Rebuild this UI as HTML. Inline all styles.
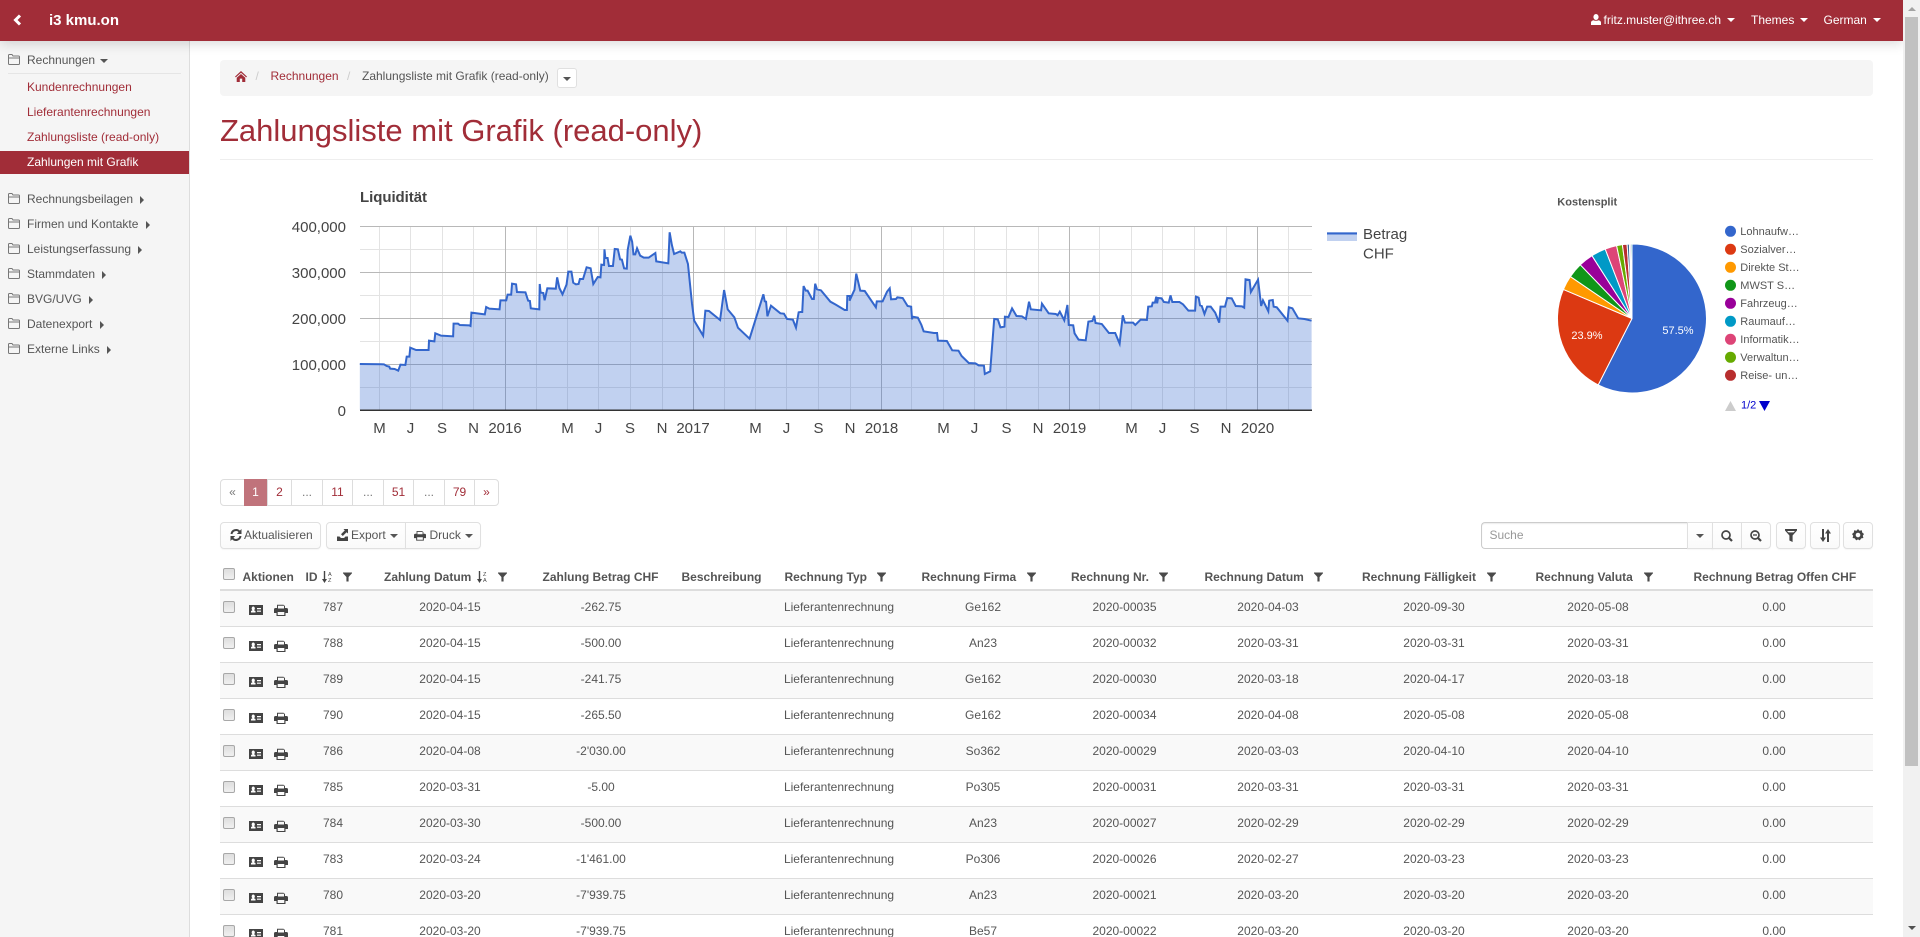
<!DOCTYPE html>
<html lang="de"><head><meta charset="utf-8"><title>Zahlungsliste mit Grafik</title>
<style>
html,body{margin:0;padding:0;width:1920px;height:937px;overflow:hidden;background:#fff;font:12px/16px "Liberation Sans",Arial,sans-serif;color:#555}
#wrap{position:absolute;left:0;top:0;width:1920px;height:937px;overflow:hidden;contain:strict}
a{color:inherit;text-decoration:none}
.t{position:absolute;white-space:nowrap;height:16px;line-height:16px}
.abs{position:absolute;box-sizing:border-box}
svg.i{position:absolute;overflow:visible}
#nav{position:absolute;left:0;top:0;width:1903px;height:41px;background:#a12d38;box-shadow:0 2px 12px rgba(0,0,0,.16);z-index:3;color:#fff}
#side{position:absolute;left:0;top:41px;width:190px;height:896px;background:#f5f5f5;border-right:1px solid #ddd;box-sizing:border-box}
#scroll{position:absolute;left:1903px;top:0;width:17px;height:937px;background:#f1f1f1;z-index:4}
.up{position:absolute;border-left:4px solid transparent;border-right:4px solid transparent}
.cd{position:absolute;width:0;height:0;border-left:4px solid transparent;border-right:4px solid transparent;border-top:4px solid #555}
.cw{border-top-color:#fff}
.cr{position:absolute;width:0;height:0;border-top:4px solid transparent;border-bottom:4px solid transparent;border-left:4px solid #555}
.lk{color:#a12d38}
.pg{position:absolute;top:479px;height:27px;box-sizing:border-box;border:1px solid #ddd;margin-left:-1px;text-align:center;line-height:24px;color:#a12d38;background:#fff;font-size:12px}
.btn{position:absolute;top:522px;height:27px;box-sizing:border-box;border:1px solid #e0e0e0;background:linear-gradient(#fff,#fafafa);box-shadow:0 1px 1px rgba(0,0,0,.04)}
.th{font-weight:bold}
.ck{position:absolute;left:223px;width:12px;height:12px;box-sizing:border-box;border:1px solid #a8a8a8;border-radius:2px;background:linear-gradient(#dedede,#f0f0f0)}
.r{position:absolute;left:220px;width:1653px;height:36px;box-sizing:border-box;border-bottom:1px solid #ddd}
.r.s{background:#f9f9f9}
.r .ck{left:3px;top:10px}
.r svg{position:absolute}
.r span{position:absolute;top:8px;line-height:17px;white-space:nowrap;transform:translateX(-50%)}
.r span:nth-of-type(1){left:113px}.r span:nth-of-type(2){left:230px}.r span:nth-of-type(3){left:381px}
.r span:nth-of-type(4){left:619px}.r span:nth-of-type(5){left:763px}.r span:nth-of-type(6){left:904.5px}
.r span:nth-of-type(7){left:1048px}.r span:nth-of-type(8){left:1214px}.r span:nth-of-type(9){left:1378px}.r span:nth-of-type(10){left:1554px}
svg text{font-family:"Liberation Sans",Arial,sans-serif}
</style></head><body>
<div id="wrap">
<svg width="0" height="0" style="position:absolute">
<symbol id="fo" viewBox="0 0 12 11"><path d="M.5 9.5V1.5Q.5.5 1.5.5H4L5 2H10.5Q11.5 2 11.5 3V9.5Q11.5 10.5 10.5 10.5H1.5Q.5 10.5 .5 9.5ZM.5 4H11.5" fill="none" stroke="#777" stroke-width="1"/></symbol>
<symbol id="fi" viewBox="0 0 10 10"><path d="M0 0H10V.8L6.2 5V10H3.8V5L0 .8Z" fill="#4a4a4a"/></symbol>
<symbol id="pr" viewBox="0 0 14 12"><path d="M3 4V.7H9.5L11 2V4H12.4Q14 4 14 5.6V9H11.5V12H2.5V9H0V5.6Q0 4 1.6 4ZM4 4.5H10V1.7H4ZM3.7 8V11H10.3V8Z" fill="#444" fill-rule="evenodd"/></symbol>
<symbol id="ca" viewBox="0 0 14 10"><path d="M0 0H14V10H0Z" fill="#444"/><path d="M2 7.5V6L3.5 5.3A1.6 2 0 1 1 5 5.3L6.5 6V7.5ZM8 3H12V4.2H8ZM8 5.6H12V6.8H8Z" fill="#fff"/></symbol>
</svg>

<div id="nav">
 <svg class="i" style="left:13px;top:14px" width="9" height="12" viewBox="0 0 9 12"><path d="M7 1.5L2.5 6L7 10.5" fill="none" stroke="#fff" stroke-width="3"/></svg>
 <span class="t" style="left:49px;top:13px;font-size:15px;font-weight:bold">i3 kmu.on</span>
 <svg class="i" style="left:1591px;top:14px" width="10" height="11" viewBox="0 0 10 11"><path d="M5 0A2.6 3 0 0 1 5 6A2.6 3 0 0 1 5 0ZM0 11V8.5Q0 6.8 2.5 6.2Q5 7.4 7.5 6.2Q10 6.8 10 8.5V11Z" fill="#fff"/></svg>
 <span class="t" style="left:1603.5px;top:12px">fritz.muster@ithree.ch</span><i class="cd cw" style="left:1727px;top:18px"></i>
 <span class="t" style="left:1751px;top:12px">Themes</span><i class="cd cw" style="left:1799.5px;top:18px"></i>
 <span class="t" style="left:1823.5px;top:12px">German</span><i class="cd cw" style="left:1872.5px;top:18px"></i>
</div>

<div id="scroll">
 <i class="up" style="left:4.5px;top:7px;border-bottom:4px solid #a3a3a3"></i>
 <div class="abs" style="left:2px;top:17px;width:13px;height:749px;background:#c1c1c1"></div>
 <i class="up" style="left:4.5px;top:926px;border-top:4px solid #505050"></i>
</div>

<div id="side"></div>
<div class="abs" style="left:8px;top:73px;width:173px;height:1px;background:#e5e5e5"></div>
<div class="abs" style="left:0;top:151px;width:189px;height:23px;background:#a12d38"></div>
<svg class="i" style="left:8px;top:54px" width="12" height="11"><use href="#fo"/></svg><span class="t" style="left:27px;top:52px">Rechnungen</span><i class="cd" style="left:100px;top:59px"></i>
<a class="t lk" style="left:27px;top:79px">Kundenrechnungen</a>
<a class="t lk" style="left:27px;top:104px">Lieferantenrechnungen</a>
<a class="t lk" style="left:27px;top:129px">Zahlungsliste (read-only)</a>
<a class="t" style="left:27px;top:154px;color:#fff">Zahlungen mit Grafik</a>
<svg class="i" style="left:8px;top:193px" width="12" height="11"><use href="#fo"/></svg><span class="t" style="left:27px;top:191px">Rechnungsbeilagen</span><i class="cr" style="left:140px;top:196px"></i>
<svg class="i" style="left:8px;top:218px" width="12" height="11"><use href="#fo"/></svg><span class="t" style="left:27px;top:216px">Firmen und Kontakte</span><i class="cr" style="left:146px;top:221px"></i>
<svg class="i" style="left:8px;top:243px" width="12" height="11"><use href="#fo"/></svg><span class="t" style="left:27px;top:241px">Leistungserfassung</span><i class="cr" style="left:138px;top:246px"></i>
<svg class="i" style="left:8px;top:268px" width="12" height="11"><use href="#fo"/></svg><span class="t" style="left:27px;top:266px">Stammdaten</span><i class="cr" style="left:102px;top:271px"></i>
<svg class="i" style="left:8px;top:293px" width="12" height="11"><use href="#fo"/></svg><span class="t" style="left:27px;top:291px">BVG/UVG</span><i class="cr" style="left:89px;top:296px"></i>
<svg class="i" style="left:8px;top:318px" width="12" height="11"><use href="#fo"/></svg><span class="t" style="left:27px;top:316px">Datenexport</span><i class="cr" style="left:100px;top:321px"></i>
<svg class="i" style="left:8px;top:343px" width="12" height="11"><use href="#fo"/></svg><span class="t" style="left:27px;top:341px">Externe Links</span><i class="cr" style="left:107px;top:346px"></i>

<div class="abs" style="left:220px;top:60px;width:1653px;height:36px;background:#f5f5f5;border-radius:4px"></div>
<svg class="i" style="left:235px;top:71px" width="12" height="11" viewBox="0 0 12 11"><path d="M6 0L12 5.6L11.2 6.4L6 1.7L.8 6.4L0 5.6ZM6 3L10.3 6.8V11H7.2V7.6H4.8V11H1.7V6.8Z" fill="#a12d38"/></svg>
<span class="t" style="left:255.5px;top:68px;color:#ccc">/</span>
<a class="t lk" style="left:270.5px;top:68px">Rechnungen</a>
<span class="t" style="left:347px;top:68px;color:#ccc">/</span>
<span class="t" style="left:362px;top:68px">Zahlungsliste mit Grafik (read-only)</span>
<div class="abs" style="left:557px;top:68px;width:20px;height:20px;background:#fff;border:1px solid #e0e0e0;border-radius:3px"></div><i class="cd" style="left:563px;top:77px"></i>

<div class="t" style="left:220px;top:113px;font-size:31px;line-height:36px;height:36px;color:#a12d38">Zahlungsliste mit Grafik (read-only)</div>
<div class="abs" style="left:220px;top:159px;width:1653px;height:1px;background:#eee"></div>

<svg class="i" style="left:0;top:0" width="1920" height="937">
 <g stroke="#e3e3e3" stroke-width="1" fill="none">
  <path d="M360 249.5H1312M360 295.5H1312M360 341.5H1312M360 387.5H1312"/>
  <path d="M379.5 226V410M410.5 226V410M442.5 226V410M473.5 226V410M536.5 226V410M567.5 226V410M598.5 226V410M630.5 226V410M662.5 226V410M724.5 226V410M755.5 226V410M786.5 226V410M818.5 226V410M850.5 226V410M911.5 226V410M943.5 226V410M974.5 226V410M1006.5 226V410M1038.5 226V410M1099.5 226V410M1131.5 226V410M1162.5 226V410M1194.5 226V410M1226.5 226V410M1288.5 226V410"/>
 </g>
 <g stroke="#b8b8b8" stroke-width="1" fill="none">
  <path d="M360 226.5H1312M360 272.5H1312M360 318.5H1312M360 364.5H1312"/>
  <path d="M505.5 226V410M693.5 226V410M881.5 226V410M1069.5 226V410M1257.5 226V410"/>
 </g>
 <g transform="translate(200 170) scale(.44643 .33333)">
  <path d="M358 720V582L412 583L418 588L424 590L426 596L436 597L444 602L449 584L460 585L463 560L469 560L471 533L484 540L512 540L513 512L525 514L527 490L540 497L567 499L568 461L578 461L582 465L603 466L606 468L608 428L638 433L641 411L648 416L671 418L673 391L686 391L689 374L697 374L699 341L708 343L710 366L729 367L735 392L739 393L741 415L760 418L761 342L763 368L769 369L772 391L778 355L797 356L800 322L805 354L812 373L821 344L825 305L832 305L836 338L842 343L848 342L851 327L858 327L866 292L875 295L881 342L891 321L897 322L899 284L905 285L906 238L908 264L913 264L916 288L925 288L929 237L936 238L941 268L945 269L950 295L956 296L958 240L964 197L968 215L971 253L975 253L979 235L986 257L994 263L1005 263L1020 249L1022 274L1049 280L1052 187L1057 225L1062 252L1076 244L1079 248L1085 248L1093 282L1102 400L1107 452L1127 497L1132 422L1140 423L1165 450L1174 360L1182 418L1197 442L1205 473L1231 506L1262 373L1265 394L1268 395L1271 439L1279 407L1300 430L1308 431L1315 447L1328 449L1335 473L1341 427L1344 426V720Z" fill="#3366cc" fill-opacity=".3"/>
  <path d="M358 582L412 583L418 588L424 590L426 596L436 597L444 602L449 584L460 585L463 560L469 560L471 533L484 540L512 540L513 512L525 514L527 490L540 497L567 499L568 461L578 461L582 465L603 466L606 468L608 428L638 433L641 411L648 416L671 418L673 391L686 391L689 374L697 374L699 341L708 343L710 366L729 367L735 392L739 393L741 415L760 418L761 342L763 368L769 369L772 391L778 355L797 356L800 322L805 354L812 373L821 344L825 305L832 305L836 338L842 343L848 342L851 327L858 327L866 292L875 295L881 342L891 321L897 322L899 284L905 285L906 238L908 264L913 264L916 288L925 288L929 237L936 238L941 268L945 269L950 295L956 296L958 240L964 197L968 215L971 253L975 253L979 235L986 257L994 263L1005 263L1020 249L1022 274L1049 280L1052 187L1057 225L1062 252L1076 244L1079 248L1085 248L1093 282L1102 400L1107 452L1127 497L1132 422L1140 423L1165 450L1174 360L1182 418L1197 442L1205 473L1231 506L1262 373L1265 394L1268 395L1271 439L1279 407L1300 430L1308 431L1315 447L1328 449L1335 473L1341 427L1344 426" fill="none" stroke="#3366cc" stroke-width="2" vector-effect="non-scaling-stroke"/>
 </g>
 <g transform="translate(800 170) scale(.44643 .33333)">
  <path d="M0 720V426L5 426L8 348L13 362L17 362L27 387L31 387L34 341L38 358L47 361L68 395L80 404L100 420L105 420L106 378L112 378L111 392L120 365L122 360L126 311L135 362L145 363L170 412L172 394L185 394L195 365L201 355L204 388L215 387L218 382L230 384L241 408L249 410L251 448L252 440L264 443L272 465L277 484L300 489L307 489L309 512L329 513L341 541L355 542L362 558L378 579L393 580L400 586L412 587L414 612L426 604L435 447L443 448L449 472L458 470L459 440L467 441L475 415L485 438L497 439L506 447L513 395L517 418L540 421L542 401L557 430L573 432L577 436L582 425L592 451L599 405L602 465L612 466L615 490L624 509L640 511L646 455L655 453L659 437L662 459L676 462L692 489L706 489L716 521L723 436L728 458L746 458L751 465L763 449L777 450L780 410L788 409L790 398L795 398L798 380L800 400L802 384L810 385L815 396L826 398L830 376L834 396L850 396L858 403L870 422L885 422L887 380L893 383L896 406L900 408L906 432L912 410L920 410L930 428L939 458L942 410L952 410L957 384L967 385L976 408L990 409L995 413L998 328L1007 330L1010 366L1026 329L1033 408L1037 391L1049 424L1051 392L1059 390L1061 410L1068 412L1092 452L1095 412L1103 415L1116 445L1130 447L1146 452V720Z" fill="#3366cc" fill-opacity=".3"/>
  <path d="M0 426L5 426L8 348L13 362L17 362L27 387L31 387L34 341L38 358L47 361L68 395L80 404L100 420L105 420L106 378L112 378L111 392L120 365L122 360L126 311L135 362L145 363L170 412L172 394L185 394L195 365L201 355L204 388L215 387L218 382L230 384L241 408L249 410L251 448L252 440L264 443L272 465L277 484L300 489L307 489L309 512L329 513L341 541L355 542L362 558L378 579L393 580L400 586L412 587L414 612L426 604L435 447L443 448L449 472L458 470L459 440L467 441L475 415L485 438L497 439L506 447L513 395L517 418L540 421L542 401L557 430L573 432L577 436L582 425L592 451L599 405L602 465L612 466L615 490L624 509L640 511L646 455L655 453L659 437L662 459L676 462L692 489L706 489L716 521L723 436L728 458L746 458L751 465L763 449L777 450L780 410L788 409L790 398L795 398L798 380L800 400L802 384L810 385L815 396L826 398L830 376L834 396L850 396L858 403L870 422L885 422L887 380L893 383L896 406L900 408L906 432L912 410L920 410L930 428L939 458L942 410L952 410L957 384L967 385L976 408L990 409L995 413L998 328L1007 330L1010 366L1026 329L1033 408L1037 391L1049 424L1051 392L1059 390L1061 410L1068 412L1092 452L1095 412L1103 415L1116 445L1130 447L1146 452" fill="none" stroke="#3366cc" stroke-width="2" vector-effect="non-scaling-stroke"/>
 </g>
 <rect x="360" y="409.5" width="952" height="1.5" fill="#333"/>
 <text x="360" y="202" font-size="15" font-weight="bold" fill="#444" textLength="67">Liquidität</text>
 <g font-size="15" fill="#444" text-anchor="end">
  <text x="346" y="232">400,000</text><text x="346" y="278">300,000</text><text x="346" y="324">200,000</text><text x="346" y="370">100,000</text><text x="346" y="416">0</text>
 </g>
 <g font-size="15" fill="#444" text-anchor="middle">
  <text x="379.5" y="433">M</text><text x="410.5" y="433">J</text><text x="442" y="433">S</text><text x="473.5" y="433">N</text><text x="505" y="433">2016</text>
  <text x="567.5" y="433">M</text><text x="598.5" y="433">J</text><text x="630" y="433">S</text><text x="662" y="433">N</text><text x="693" y="433">2017</text>
  <text x="755.5" y="433">M</text><text x="786.5" y="433">J</text><text x="818.5" y="433">S</text><text x="850" y="433">N</text><text x="881.5" y="433">2018</text>
  <text x="943.5" y="433">M</text><text x="974.5" y="433">J</text><text x="1006.5" y="433">S</text><text x="1038" y="433">N</text><text x="1069.5" y="433">2019</text>
  <text x="1131.5" y="433">M</text><text x="1162.5" y="433">J</text><text x="1194.5" y="433">S</text><text x="1226" y="433">N</text><text x="1257.5" y="433">2020</text>
 </g>
 <rect x="1327" y="232" width="30" height="9" fill="#3366cc" fill-opacity=".3"/><rect x="1327" y="232.5" width="30" height="2" fill="#3366cc"/>
 <text x="1363" y="239" font-size="15" fill="#444">Betrag</text><text x="1363" y="258.5" font-size="15" fill="#444">CHF</text>

 <text x="1557.3" y="205.5" font-size="11" font-weight="bold" fill="#555">Kostensplit</text>
 <g transform="translate(1632 318.5)" stroke="#fff" stroke-width="1" stroke-linejoin="round">
  <path d="M0 0V-74.5A74.5 74.5 0 1 1 -33.8 66.4Z" fill="#3366cc"/>
  <path d="M0 0L-33.8 66.4A74.5 74.5 0 0 1 -68.6 -29.1Z" fill="#dc3912"/>
  <path d="M0 0L-68.6 -29.1A74.5 74.5 0 0 1 -61.6 -41.9Z" fill="#ff9900"/>
  <path d="M0 0L-61.6 -41.9A74.5 74.5 0 0 1 -51.7 -53.7Z" fill="#109618"/>
  <path d="M0 0L-51.7 -53.7A74.5 74.5 0 0 1 -40 -62.8Z" fill="#990099"/>
  <path d="M0 0L-40 -62.8A74.5 74.5 0 0 1 -26.8 -69.5Z" fill="#0099c6"/>
  <path d="M0 0L-26.8 -69.5A74.5 74.5 0 0 1 -15.4 -72.9Z" fill="#dd4477"/>
  <path d="M0 0L-15.4 -72.9A74.5 74.5 0 0 1 -9.6 -73.9Z" fill="#66aa00"/>
  <path d="M0 0L-9.6 -73.9A74.5 74.5 0 0 1 -4.9 -74.3Z" fill="#b82e2e"/>
  <path d="M0 0L-4.9 -74.3A74.5 74.5 0 0 1 -2.6 -74.5Z" fill="#316395"/>
  <path d="M0 0L-2.6 -74.5A74.5 74.5 0 0 1 -1.3 -74.5Z" fill="#994499"/>
  <path d="M0 0L-1.3 -74.5A74.5 74.5 0 0 1 0 -74.5Z" fill="#22aa99"/>
 </g>
 <text x="1678" y="334" font-size="11" fill="#fff" text-anchor="middle">57.5%</text>
 <text x="1587" y="339" font-size="11" fill="#fff" text-anchor="middle">23.9%</text>
 <g>
  <circle cx="1730.5" cy="231.3" r="5.5" fill="#3366cc"/><circle cx="1730.5" cy="249.3" r="5.5" fill="#dc3912"/><circle cx="1730.5" cy="267.3" r="5.5" fill="#ff9900"/><circle cx="1730.5" cy="285.3" r="5.5" fill="#109618"/><circle cx="1730.5" cy="303.3" r="5.5" fill="#990099"/><circle cx="1730.5" cy="321.3" r="5.5" fill="#0099c6"/><circle cx="1730.5" cy="339.3" r="5.5" fill="#dd4477"/><circle cx="1730.5" cy="357.3" r="5.5" fill="#66aa00"/><circle cx="1730.5" cy="375.3" r="5.5" fill="#b82e2e"/>
 </g>
 <g font-size="11" fill="#555">
  <text x="1740.3" y="235">Lohnaufw…</text><text x="1740.3" y="253">Sozialver…</text><text x="1740.3" y="271">Direkte St…</text><text x="1740.3" y="289">MWST S…</text><text x="1740.3" y="307">Fahrzeug…</text><text x="1740.3" y="325">Raumauf…</text><text x="1740.3" y="343">Informatik…</text><text x="1740.3" y="361">Verwaltun…</text><text x="1740.3" y="379">Reise- un…</text>
 </g>
 <path d="M1725 411L1730.5 401L1736 411Z" fill="#ccc"/>
 <text x="1741" y="408.5" font-size="11" fill="#0000cc">1/2</text>
 <path d="M1759 401H1770L1764.5 411Z" fill="#0000cc"/>
</svg>

<div class="pg" style="left:221px;width:25px;color:#777;border-radius:4px 0 0 4px">«</div>
<div class="pg" style="left:245px;width:23px;background:#c0737b;border-color:#c0737b;color:#fff">1</div>
<div class="pg" style="left:268px;width:25px">2</div>
<div class="pg" style="left:292px;width:32px;color:#777">...</div>
<div class="pg" style="left:323px;width:31px">11</div>
<div class="pg" style="left:353px;width:32px;color:#777">...</div>
<div class="pg" style="left:384px;width:31px">51</div>
<div class="pg" style="left:414px;width:32px;color:#777">...</div>
<div class="pg" style="left:445px;width:31px">79</div>
<div class="pg" style="left:475px;width:25px;border-radius:0 4px 4px 0">»</div>

<div class="btn" style="left:220px;width:101px;border-radius:4px"></div>
<svg class="i" style="left:230px;top:529px" width="12" height="12" viewBox="0 0 12 12"><path d="M1.5 5A4.6 4.6 0 0 1 9.5 2.6M10.5 7A4.6 4.6 0 0 1 2.5 9.4" fill="none" stroke="#444" stroke-width="2"/><path d="M11.5 0V5H6.8ZM.5 12V7H5.2Z" fill="#444"/></svg>
<span class="t" style="left:244px;top:527px">Aktualisieren</span>
<div class="btn" style="left:326px;width:80px;border-radius:4px 0 0 4px"></div>
<div class="btn" style="left:405px;width:76px;border-radius:0 4px 4px 0"></div>
<svg class="i" style="left:336px;top:529px" width="13" height="12" viewBox="0 0 13 12"><path d="M7.5 0H12V4.5L10.6 3.2L6.8 7L5 5.2L8.8 1.4ZM1 7.5H3.5L5 9H8L9.5 7.5H12V12H1Z" fill="#444"/></svg>
<span class="t" style="left:351px;top:527px">Export</span><i class="cd" style="left:390px;top:534px"></i>
<svg class="i" style="left:414px;top:530px" width="12" height="11"><use href="#pr"/></svg>
<span class="t" style="left:429.5px;top:527px">Druck</span><i class="cd" style="left:465px;top:534px"></i>

<div class="abs" style="left:1481px;top:522px;width:207px;height:27px;border:1px solid #ccc;border-right:0;border-radius:4px 0 0 4px;background:#fff;box-shadow:inset 0 1px 1px rgba(0,0,0,.075)"></div>
<span class="t" style="left:1489.5px;top:527px;color:#999">Suche</span>
<div class="btn" style="left:1687px;width:26px"></div><i class="cd" style="left:1696px;top:534px"></i>
<div class="btn" style="left:1712px;width:30px"></div>
<svg class="i" style="left:1721px;top:530px" width="12" height="12" viewBox="0 0 12 12"><circle cx="5" cy="5" r="4" fill="none" stroke="#444" stroke-width="1.7"/><path d="M8 8L11 11" stroke="#444" stroke-width="2.2"/></svg>
<div class="btn" style="left:1741px;width:30px;border-radius:0 4px 4px 0"></div>
<svg class="i" style="left:1750px;top:530px" width="12" height="12" viewBox="0 0 12 12"><circle cx="5" cy="5" r="4" fill="none" stroke="#444" stroke-width="1.7"/><path d="M8 8L11 11" stroke="#444" stroke-width="2.2"/><path d="M3 5H7" stroke="#444" stroke-width="1.3"/></svg>
<div class="btn" style="left:1776px;width:30px;border-radius:4px"></div>
<svg class="i" style="left:1785px;top:529px" width="12" height="13" viewBox="0 0 12 13"><path d="M0 0H12V1.5L7.6 6.5V13L4.4 11.5V6.5L0 1.5Z" fill="#444"/><path d="M2 2H10L8.5 3.4H3.5Z" fill="#fff"/></svg>
<div class="btn" style="left:1810px;width:30px;border-radius:4px"></div>
<svg class="i" style="left:1819.5px;top:529px" width="11" height="13" viewBox="0 0 11 13"><path d="M3 0V9.5M8 13V3.5" stroke="#444" stroke-width="2"/><path d="M0 8.5H6L3 13ZM5 4.5H11L8 0Z" fill="#444"/></svg>
<div class="btn" style="left:1843px;width:30px;border-radius:4px"></div>
<svg class="i" style="left:1852px;top:529px" width="12" height="12" viewBox="0 0 12 12"><path d="M6 0L7.5 1.8L9.8 1.2L10.2 3.5L12 5L10.8 6.8L11.4 9L9.2 9.4L7.8 11.4L6 10.4L4.2 11.4L2.8 9.4L.6 9L1.2 6.8L0 5L1.8 3.5L2.2 1.2L4.5 1.8Z M6 3.7A2.3 2.3 0 1 0 6.01 3.7Z" fill="#444" fill-rule="evenodd"/></svg>

<div class="ck" style="top:568px"></div>
<span class="t th" style="left:242.5px;top:569px">Aktionen</span>
<span class="t th" style="left:305.5px;top:569px">ID</span>
<svg class="i" style="left:322px;top:571px" width="11" height="12" viewBox="0 0 11 12"><path d="M2.5 0V9" stroke="#444" stroke-width="1.4"/><path d="M0 8H5L2.5 12Z" fill="#444"/><text x="6" y="5" font-size="5.5" fill="#444">A</text><text x="6" y="11" font-size="5.5" fill="#444">Z</text></svg>
<svg class="i" style="left:343px;top:572px" width="9" height="10"><use href="#fi"/></svg>
<span class="t th" style="left:384px;top:569px">Zahlung Datum</span>
<svg class="i" style="left:477px;top:571px" width="11" height="12" viewBox="0 0 11 12"><path d="M2.5 0V9" stroke="#444" stroke-width="1.4"/><path d="M0 8H5L2.5 12Z" fill="#444"/><text x="6" y="5" font-size="5.5" fill="#444">Z</text><text x="6" y="11" font-size="5.5" fill="#444">A</text></svg>
<svg class="i" style="left:497.5px;top:572px" width="9" height="10"><use href="#fi"/></svg>
<span class="t th" style="left:542.5px;top:569px">Zahlung Betrag CHF</span>
<span class="t th" style="left:681.5px;top:569px">Beschreibung</span>
<span class="t th" style="left:784.5px;top:569px">Rechnung Typ</span><svg class="i" style="left:876.5px;top:572px" width="9" height="10"><use href="#fi"/></svg>
<span class="t th" style="left:921.5px;top:569px">Rechnung Firma</span><svg class="i" style="left:1026.5px;top:572px" width="9" height="10"><use href="#fi"/></svg>
<span class="t th" style="left:1071px;top:569px">Rechnung Nr.</span><svg class="i" style="left:1159px;top:572px" width="9" height="10"><use href="#fi"/></svg>
<span class="t th" style="left:1204.5px;top:569px">Rechnung Datum</span><svg class="i" style="left:1314px;top:572px" width="9" height="10"><use href="#fi"/></svg>
<span class="t th" style="left:1362px;top:569px">Rechnung Fälligkeit</span><svg class="i" style="left:1487px;top:572px" width="9" height="10"><use href="#fi"/></svg>
<span class="t th" style="left:1535.5px;top:569px">Rechnung Valuta</span><svg class="i" style="left:1643.5px;top:572px" width="9" height="10"><use href="#fi"/></svg>
<span class="t th" style="left:1693.5px;top:569px">Rechnung Betrag Offen CHF</span>
<div class="abs" style="left:220px;top:589px;width:1653px;height:2px;background:#ddd"></div>

<div class="r s" style="top:591px"><b class="ck"></b><svg style="left:29px;top:13.5px" width="14" height="10"><use href="#ca"/></svg><svg style="left:54px;top:13px" width="14" height="12"><use href="#pr"/></svg><span>787</span><span>2020-04-15</span><span>-262.75</span><span>Lieferantenrechnung</span><span>Ge162</span><span>2020-00035</span><span>2020-04-03</span><span>2020-09-30</span><span>2020-05-08</span><span>0.00</span></div>
<div class="r" style="top:627px"><b class="ck"></b><svg style="left:29px;top:13.5px" width="14" height="10"><use href="#ca"/></svg><svg style="left:54px;top:13px" width="14" height="12"><use href="#pr"/></svg><span>788</span><span>2020-04-15</span><span>-500.00</span><span>Lieferantenrechnung</span><span>An23</span><span>2020-00032</span><span>2020-03-31</span><span>2020-03-31</span><span>2020-03-31</span><span>0.00</span></div>
<div class="r s" style="top:663px"><b class="ck"></b><svg style="left:29px;top:13.5px" width="14" height="10"><use href="#ca"/></svg><svg style="left:54px;top:13px" width="14" height="12"><use href="#pr"/></svg><span>789</span><span>2020-04-15</span><span>-241.75</span><span>Lieferantenrechnung</span><span>Ge162</span><span>2020-00030</span><span>2020-03-18</span><span>2020-04-17</span><span>2020-03-18</span><span>0.00</span></div>
<div class="r" style="top:699px"><b class="ck"></b><svg style="left:29px;top:13.5px" width="14" height="10"><use href="#ca"/></svg><svg style="left:54px;top:13px" width="14" height="12"><use href="#pr"/></svg><span>790</span><span>2020-04-15</span><span>-265.50</span><span>Lieferantenrechnung</span><span>Ge162</span><span>2020-00034</span><span>2020-04-08</span><span>2020-05-08</span><span>2020-05-08</span><span>0.00</span></div>
<div class="r s" style="top:735px"><b class="ck"></b><svg style="left:29px;top:13.5px" width="14" height="10"><use href="#ca"/></svg><svg style="left:54px;top:13px" width="14" height="12"><use href="#pr"/></svg><span>786</span><span>2020-04-08</span><span>-2'030.00</span><span>Lieferantenrechnung</span><span>So362</span><span>2020-00029</span><span>2020-03-03</span><span>2020-04-10</span><span>2020-04-10</span><span>0.00</span></div>
<div class="r" style="top:771px"><b class="ck"></b><svg style="left:29px;top:13.5px" width="14" height="10"><use href="#ca"/></svg><svg style="left:54px;top:13px" width="14" height="12"><use href="#pr"/></svg><span>785</span><span>2020-03-31</span><span>-5.00</span><span>Lieferantenrechnung</span><span>Po305</span><span>2020-00031</span><span>2020-03-31</span><span>2020-03-31</span><span>2020-03-31</span><span>0.00</span></div>
<div class="r s" style="top:807px"><b class="ck"></b><svg style="left:29px;top:13.5px" width="14" height="10"><use href="#ca"/></svg><svg style="left:54px;top:13px" width="14" height="12"><use href="#pr"/></svg><span>784</span><span>2020-03-30</span><span>-500.00</span><span>Lieferantenrechnung</span><span>An23</span><span>2020-00027</span><span>2020-02-29</span><span>2020-02-29</span><span>2020-02-29</span><span>0.00</span></div>
<div class="r" style="top:843px"><b class="ck"></b><svg style="left:29px;top:13.5px" width="14" height="10"><use href="#ca"/></svg><svg style="left:54px;top:13px" width="14" height="12"><use href="#pr"/></svg><span>783</span><span>2020-03-24</span><span>-1'461.00</span><span>Lieferantenrechnung</span><span>Po306</span><span>2020-00026</span><span>2020-02-27</span><span>2020-03-23</span><span>2020-03-23</span><span>0.00</span></div>
<div class="r s" style="top:879px"><b class="ck"></b><svg style="left:29px;top:13.5px" width="14" height="10"><use href="#ca"/></svg><svg style="left:54px;top:13px" width="14" height="12"><use href="#pr"/></svg><span>780</span><span>2020-03-20</span><span>-7'939.75</span><span>Lieferantenrechnung</span><span>An23</span><span>2020-00021</span><span>2020-03-20</span><span>2020-03-20</span><span>2020-03-20</span><span>0.00</span></div>
<div class="r" style="top:915px;height:22px;border:0;overflow:hidden"><b class="ck"></b><svg style="left:29px;top:13.5px" width="14" height="10"><use href="#ca"/></svg><svg style="left:54px;top:13px" width="14" height="12"><use href="#pr"/></svg><span>781</span><span>2020-03-20</span><span>-7'939.75</span><span>Lieferantenrechnung</span><span>Be57</span><span>2020-00022</span><span>2020-03-20</span><span>2020-03-20</span><span>2020-03-20</span><span>0.00</span></div>
</div>
</body></html>
